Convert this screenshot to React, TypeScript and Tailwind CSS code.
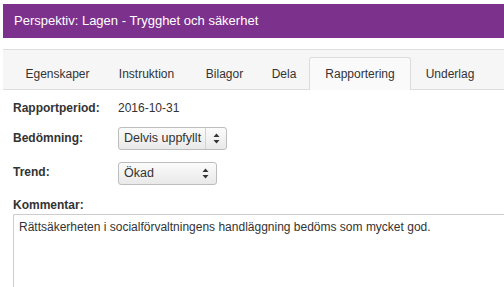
import React from 'react';

const tabs = [
  { id: 'egenskaper', label: 'Egenskaper', w: 'w-[91px]' },
  { id: 'instruktion', label: 'Instruktion', w: 'w-[87px]' },
  { id: 'bilagor', label: 'Bilagor', w: 'w-[69px]' },
  { id: 'dela', label: 'Dela', w: 'w-[50px]' },
  { id: 'rapportering', label: 'Rapportering', w: 'w-[102px]' },
  { id: 'underlag', label: 'Underlag', w: 'w-[78px]' },
];

const Arrows = () => (
  <svg width="7" height="11" viewBox="0 0 7 11" className="text-[#333]">
    <path d="M3.5 0.5 L6.5 4 L0.5 4 Z" fill="currentColor" />
    <path d="M3.5 10.5 L6.5 7 L0.5 7 Z" fill="currentColor" />
  </svg>
);

const Select = ({ value, width, divider }: { value: string; width: string; divider?: boolean }) => (
  <div
    className={`${width} h-[23px] flex items-stretch rounded-[3px] border border-[#bdbdbd] bg-gradient-to-b from-[#fbfbfb] to-[#e9e9e9] text-[12.5px] text-[#333]`}
  >
    <div className="flex-1 flex items-center pl-[5px] overflow-hidden whitespace-nowrap">{value}</div>
    <div className={`w-[21px] flex items-center justify-center ${divider ? 'border-l border-[#d3d3d3]' : ''}`}>
      <Arrows />
    </div>
  </div>
);

export default function App() {
  const activeTab = 'rapportering';

  return (
    <div
      className="w-[504px] h-[287px] overflow-hidden bg-white text-[#333] pt-[4px] pl-[3px]"
      style={{ fontFamily: '"Liberation Sans", Arial, sans-serif' }}
    >
      {/* Header */}
      <div className="h-[34px] bg-[#7c318c] flex items-center pl-[11px] text-white text-[13px]">
        Perspektiv: Lagen - Trygghet och säkerhet
      </div>

      {/* Tabs */}
      <div className="mt-[11px] h-[41px] border-t border-b border-[#dedede] bg-[#f6f6f6] flex items-end pl-[9px]">
        {tabs.map((tab) => (
          <div
            key={tab.id}
            className={`${tab.w} shrink-0 h-[33px] -mb-px flex items-center justify-center text-[12px] text-[#333] ${
              activeTab === tab.id ? 'bg-[#fafafa] border border-b-0 border-[#dcdcdc] rounded-t-[3px]' : 'border border-transparent'
            }`}
          >
            {tab.label}
          </div>
        ))}
      </div>

      {/* Form */}
      <div className="pl-[10px] text-[12px]">
        <div className="flex items-center h-[19px] mt-[8px]">
          <div className="w-[105px] font-bold">Rapportperiod:</div>
          <div>2016-10-31</div>
        </div>
        <div className="flex items-start mt-[10px]">
          <div className="w-[105px] font-bold pt-[2px]">Bedömning:</div>
          <Select value="Delvis uppfyllt" width="w-[109px]" divider />
        </div>
        <div className="flex items-start mt-[12px]">
          <div className="w-[105px] font-bold pt-[1px]">Trend:</div>
          <Select value="Ökad" width="w-[99px]" />
        </div>
        <div className="font-bold mt-[13px] leading-[15px]">Kommentar:</div>
        <div className="mt-[1px] h-[80px] border border-[#cccccc] border-r-0 rounded-l-[2px] pl-[5px] pt-[5px] leading-[15px] whitespace-nowrap">
          Rättsäkerheten i socialförvaltningens handläggning bedöms som mycket god.
        </div>
      </div>
    </div>
  );
}
